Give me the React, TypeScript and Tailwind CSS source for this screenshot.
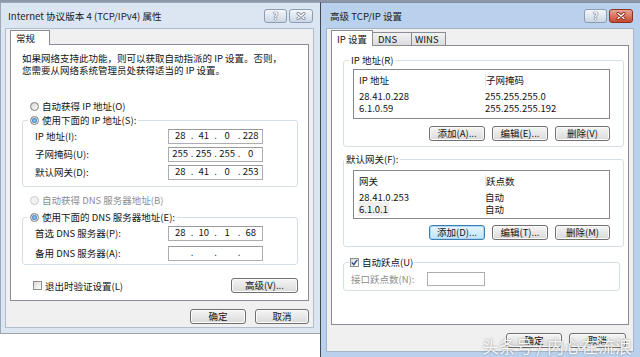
import React from 'react';

function HelpGlyph() {
  return (
    <span className="text-[10px] leading-none font-bold text-white [text-shadow:0_0_1px_#56657a,0_0_1px_#56657a,0_0_1px_#56657a]">
      ?
    </span>
  );
}

function CloseGlyph({ active }: { active?: boolean }) {
  return (
    <svg width="10" height="8" viewBox="0 0 10 8">
      <path d="M2 1.5 L8 6.5 M8 1.5 L2 6.5" stroke={active ? '#7d2415' : '#7b8797'} strokeWidth="3" strokeLinecap="round" />
      <path d="M2 1.5 L8 6.5 M8 1.5 L2 6.5" stroke="#ffffff" strokeWidth="1.5" strokeLinecap="round" />
    </svg>
  );
}

function TitleBar({ title, active, pad }: { title: string; active?: boolean; pad: string }) {
  return (
    <div className="flex h-[25px] items-center justify-between">
      <span className={`${pad} text-[9.6px] text-[#1b1b1b]`}>{title}</span>
      <div className="flex gap-[2px] pr-[1px]">
        <div className="flex h-[14px] w-[23px] items-center justify-center rounded-[3px] border border-[#8d9cb1] bg-linear-to-b from-[#f3f6fa] to-[#cbd7e6]">
          <HelpGlyph />
        </div>
        <div
          className={
            active
              ? 'flex h-[14px] w-[24px] items-center justify-center rounded-[3px] border border-[#8a3326] bg-linear-to-b from-[#e9a596] to-[#c5452b]'
              : 'flex h-[14px] w-[24px] items-center justify-center rounded-[3px] border border-[#8d9cb1] bg-linear-to-b from-[#f3f6fa] to-[#cbd7e6]'
          }
        >
          <CloseGlyph active={active} />
        </div>
      </div>
    </div>
  );
}

function Btn({ label, className, focused }: { label: string; className: string; focused?: boolean }) {
  return (
    <div
      className={`flex h-[15px] items-center justify-center rounded-[3px] border leading-none ${
        focused
          ? 'border-[#3c7db3] bg-linear-to-b from-[#e6f5fd] to-[#bfe4f8] shadow-[inset_0_0_0_1px_#a9d9f5]'
          : 'border-[#707070] bg-linear-to-b from-[#f5f5f5] to-[#dadada] shadow-[inset_0_0_0_1px_#fbfbfb]'
      } ${className}`}
    >
      {label}
    </div>
  );
}

function Radio({ checked, disabled }: { checked?: boolean; disabled?: boolean }) {
  return (
    <span
      className={`flex h-[9px] w-[9px] shrink-0 items-center justify-center rounded-full border ${
        disabled ? 'border-[#c9c9c9] bg-[#f2f2f2]' : 'border-[#7c7c7c] bg-linear-to-br from-[#d6d6d6] to-[#fbfbfb]'
      }`}
    >
      {checked && <span className="h-[5px] w-[5px] rounded-full bg-radial from-[#9bd5f9] to-[#1c58a5]" />}
    </span>
  );
}

function Check({ checked }: { checked?: boolean }) {
  return (
    <span className="flex h-[9px] w-[9px] shrink-0 items-center justify-center border border-[#8e8f8f] bg-linear-to-br from-[#dadada] to-white">
      {checked && (
        <svg width="7" height="7" viewBox="0 0 7 7">
          <path d="M0.8 3.4 L2.8 5.6 L6.2 0.9" fill="none" stroke="#2c4a7c" strokeWidth="1.4" />
        </svg>
      )}
    </span>
  );
}

function IpField({ parts }: { parts: string[] }) {
  return (
    <div className="flex h-[15px] w-[95px] items-center border border-[#abadb3] border-t-[#9a9a9a] bg-white px-[1px] leading-none">
      {parts.map((p, i) => (
        <React.Fragment key={i}>
          {i > 0 && <span className="w-[3px] text-center">.</span>}
          <span className="flex-1 text-center">{p}</span>
        </React.Fragment>
      ))}
    </div>
  );
}

function IpRow({ label, parts, className }: { label: string; parts: string[]; className?: string }) {
  return (
    <div className={`flex h-[18px] items-center ${className ?? ''}`}>
      <span className="w-[133px]">{label}</span>
      <IpField parts={parts} />
    </div>
  );
}

function ListView({ head, rows, className }: { head: string[]; rows: string[][]; className: string }) {
  return (
    <div className={`border border-[#828790] bg-white ${className}`}>
      <div className="flex h-[20px] items-center">
        <span className="w-[131px] pl-[5px]">{head[0]}</span>
        <span className="border-l border-[#e3e5e8] pl-0">{head[1]}</span>
      </div>
      {rows.map((r, i) => (
        <div key={i} className="flex h-[12px] items-center">
          <span className="w-[131px] pl-[4px]">
            <span className={i === 1 && r[1] === '自动' ? 'bg-[#efefef] px-[1px]' : 'px-[1px]'}>{r[0]}</span>
          </span>
          <span>{r[1]}</span>
        </div>
      ))}
    </div>
  );
}

function LeftWindow() {
  return (
    <div className="flex h-[332px] w-[320px] shrink-0 flex-col border-t border-b border-l border-[#9aa8ba] border-b-[#a3a3a3] bg-[#dbe6f2] pr-[6px] pb-[5px] pl-[4px]">
      <TitleBar title="Internet 协议版本 4 (TCP/IPv4) 属性" pad="pl-[3px]" />
      <div className="flex h-[300px] flex-col border border-[#b0bdcd] bg-[#f0f0f0] px-[4px] pt-[1px]">
        <div className="relative z-10 -mb-[1px] flex h-[15px] w-[40px] items-center border border-b-0 border-[#898c95] bg-white pl-[5px]">
          常规
        </div>
        <div className="flex h-[257px] flex-col border border-[#898c95] bg-white px-[11px] pt-[7px]">
          <p className="h-[12px]">如果网络支持此功能，则可以获取自动指派的 IP 设置。否则，</p>
          <p className="h-[12px]">您需要从网络系统管理员处获得适当的 IP 设置。</p>

          <div className="mt-[24px] ml-[8px] flex items-center gap-[3px]">
            <Radio />
            <span>自动获得 IP 地址(O)</span>
          </div>

          <fieldset className="mt-[2px] w-[276px] rounded-[3px] border border-[#d5dfe5]">
            <legend className="ml-[5px] flex items-center gap-[3px] px-[2px]">
              <Radio checked />
              <span>使用下面的 IP 地址(S):</span>
            </legend>
            <div className="pt-[1px] pb-[5px] pl-[12px]">
              <IpRow label="IP 地址(I):" parts={['28', '41', '0', '228']} />
              <IpRow label="子网掩码(U):" parts={['255', '255', '255', '0']} />
              <IpRow label="默认网关(D):" parts={['28', '41', '0', '253']} />
            </div>
          </fieldset>

          <div className="mt-[7px] ml-[8px] flex items-center gap-[3px] text-[#8d8d8d]">
            <Radio disabled />
            <span>自动获得 DNS 服务器地址(B)</span>
          </div>

          <fieldset className="mt-[5px] w-[276px] rounded-[3px] border border-[#d5dfe5]">
            <legend className="ml-[5px] flex items-center gap-[3px] px-[2px]">
              <Radio checked />
              <span>使用下面的 DNS 服务器地址(E):</span>
            </legend>
            <div className="pt-[1px] pb-[2px] pl-[12px]">
              <IpRow label="首选 DNS 服务器(P):" parts={['28', '10', '1', '68']} />
              <IpRow label="备用 DNS 服务器(A):" parts={['', '', '', '']} className="mt-[2px]" />
            </div>
          </fieldset>

          <div className="mt-[13px] flex w-[276px] items-center justify-between pl-[11px]">
            <div className="flex items-center gap-[3px]">
              <Check />
              <span>退出时验证设置(L)</span>
            </div>
            <Btn label="高级(V)..." className="w-[67px]" />
          </div>
        </div>
        <div className="mt-[8px] flex justify-end gap-[9px]">
          <Btn label="确定" className="w-[56px]" />
          <Btn label="取消" className="w-[54px]" />
        </div>
      </div>
    </div>
  );
}

function RightWindow() {
  return (
    <div className="flex h-[355px] w-[320px] shrink-0 flex-col border-t border-l border-[#3f4650] border-t-[#7f8fa3] bg-[#b9d1ec] pr-[6px] pb-[5px] pl-[5px]">
      <TitleBar title="高级 TCP/IP 设置" active pad="pl-[4px]" />
      <div className="flex h-[324px] flex-col border border-[#a4b5ca] bg-[#f0f0f0] px-[4px] pt-[1px]">
        <div className="flex items-end">
          <div className="relative z-10 -mb-[1px] flex h-[16px] w-[42px] items-center border border-b-0 border-[#898c95] bg-white pl-[5px]">
            IP 设置
          </div>
          <div className="flex h-[13px] w-[39px] items-center border border-b-0 border-l-0 border-[#898c95] bg-linear-to-b from-[#f2f2f2] to-[#dcdcdc] pl-[5px]">
            DNS
          </div>
          <div className="flex h-[13px] w-[34px] items-center border border-b-0 border-l-0 border-[#898c95] bg-linear-to-b from-[#f2f2f2] to-[#dcdcdc] pl-[3px]">
            WINS
          </div>
        </div>
        <div className="flex h-[280px] flex-col border border-[#898c95] bg-white pl-[11px]">
          <fieldset className="mt-[8px] w-[277px] rounded-[3px] border border-[#d5dfe5]">
            <legend className="ml-[5px] px-[2px]">IP 地址(R)</legend>
            <div className="pt-[3px] pr-[13px] pb-[5px] pl-[9px]">
              <ListView
                className="h-[50px] w-[257px]"
                head={['IP 地址', '子网掩码']}
                rows={[
                  ['28.41.0.228', '255.255.255.0'],
                  ['6.1.0.59', '255.255.255.192'],
                ]}
              />
              <div className="mt-[7px] flex justify-end gap-[7px]">
                <Btn label="添加(A)..." className="w-[56px]" />
                <Btn label="编辑(E)..." className="w-[56px]" />
                <Btn label="删除(V)" className="w-[55px]" />
              </div>
            </div>
          </fieldset>

          <fieldset className="mt-[6px] w-[277px] rounded-[3px] border border-[#d5dfe5]">
            <legend className="ml-[0px] px-[2px]">默认网关(F):</legend>
            <div className="pt-[5px] pr-[13px] pb-[6px] pl-[9px]">
              <ListView
                className="h-[49px] w-[257px]"
                head={['网关', '跃点数']}
                rows={[
                  ['28.41.0.253', '自动'],
                  ['6.1.0.1', '自动'],
                ]}
              />
              <div className="mt-[6px] flex justify-end gap-[7px]">
                <Btn label="添加(D)..." className="w-[56px]" focused />
                <Btn label="编辑(T)..." className="w-[56px]" />
                <Btn label="删除(M)" className="w-[55px]" />
              </div>
            </div>
          </fieldset>

          <fieldset className="mt-[9px] w-[277px] rounded-[3px] border border-[#d5dfe5]">
            <legend className="ml-[5px] flex items-center gap-[3px] px-[1px]">
              <Check checked />
              <span>自动跃点(U)</span>
            </legend>
            <div className="mt-[4px] flex h-[14px] items-center pl-[7px]">
              <span className="w-[76px] text-[#8d8d8d]">接口跃点数(N):</span>
              <div className="h-[14px] w-[58px] border border-[#abadb3] bg-white" />
            </div>
            <div className="h-[4px]" />
          </fieldset>
        </div>
        <div className="mt-[8px] flex justify-end gap-[7px] pr-[3px]">
          <Btn label="确定" className="w-[56px]" />
          <Btn label="取消" className="w-[57px]" />
        </div>
      </div>
    </div>
  );
}

export default function App() {
  return (
    <div className="relative flex h-[357px] w-[640px] flex-col overflow-hidden bg-white font-['Noto_Sans_CJK_SC','Noto_Sans',sans-serif] text-[9.5px] leading-[12px] text-[#141414]">
      <div className="h-[2px] shrink-0 bg-[#8d97a5]" />
      <div className="flex items-start">
        <LeftWindow />
        <RightWindow />
      </div>
      <div className="absolute right-[8px] bottom-[1px] text-[17px] leading-[20px] text-white/90 [text-shadow:0_0_2px_rgba(60,60,60,0.6)]">
        头条号 / 内心在流浪
      </div>
    </div>
  );
}
